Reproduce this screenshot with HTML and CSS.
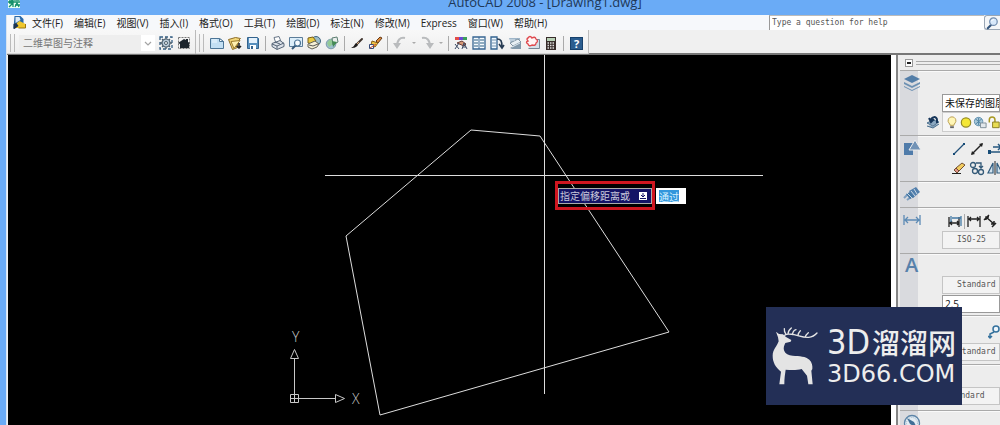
FILE: index.html
```html
<!DOCTYPE html>
<html lang="zh-CN">
<head>
<meta charset="utf-8">
<meta name="viewport" content="width=device-width, initial-scale=1">
<title>AutoCAD 2008 - [Drawing1.dwg]</title>
<link rel="stylesheet" href="styles.css">
</head>
<body>
<header class="titlebar">
  <svg class="app-icon" viewBox="0 0 12 12" aria-hidden="true"><path fill="#e8fff2" d="M0 0h12v12H0z"/><path stroke="#15906b" stroke-width="1.3" fill="none" d="M1 1l4 4M5 0v5H1M7 1h4v3H8M7 0v5M1 7h4v4M5 7l-4 4M7 11l2-4 2 4M7 9h5M0 6h12"/></svg>
  <h1 class="title">AutoCAD 2008 - [Drawing1.dwg]</h1>
</header>

<div class="frame">
  <div class="menubar">
    <svg class="doc-icon" viewBox="0 0 12 13" aria-hidden="true"><path fill="#2968a8" d="M1 0h6l3 3v9H0z"/><path fill="#dbe9f6" d="M2 1h4l1 3-5 3z"/><path fill="#efc72e" d="M2 8l4-3 6 3v4H1z"/><path fill="#1b3552" d="M0 8l3-1 2 3-4 3H0z"/><path stroke="#9b7812" fill="none" d="M5 12h7V8"/></svg>
    <nav class="menus" aria-label="菜单">
      <button>文件(F)</button><button>编辑(E)</button><button>视图(V)</button><button>插入(I)</button><button>格式(O)</button><button>工具(T)</button><button>绘图(D)</button><button>标注(N)</button><button>修改(M)</button><button>Express</button><button>窗口(W)</button><button>帮助(H)</button>
    </nav>
    <form class="help-search">
      <input type="text" aria-label="帮助搜索" value="Type a question for help">
      <button type="button" aria-label="搜索"><svg class="ico" viewBox="0 0 16 16"><path d="M6 10l-4 4" stroke="#34557c" stroke-width="2.4" stroke-linecap="round"/><circle cx="8.500" cy="6.500" r="4.300" fill="#d7e8fa" stroke="#718cae" stroke-width="1.400"/><path d="M6 6q1-2 3-2" fill="none" stroke="#fff"/></svg></button>
    </form>
  </div>

  <div class="toolbars">
    <div class="toolbar">
      <span class="grip"></span>
      <span class="workspace">
        <select aria-label="工作空间"><option>二维草图与注释</option></select>
        <svg class="chevron" viewBox="0 0 14 16" aria-hidden="true"><path d="M4 7l3 3 3-3" fill="none" stroke="#a4a4a4" stroke-width="1.200"/></svg>
      </span>
      <button class="tool" aria-label="工作空间设置"><svg class="ico" viewBox="0 0 16 16"><path fill="none" stroke="#355f84" stroke-width="1.300" stroke-dasharray="3 2" d="M2 2h12v12H2z"/><circle cx="8" cy="8" r="4" fill="#b9cad8" stroke="#4b5d6c" stroke-width="1.200"/><circle cx="8" cy="8" r="1.500" fill="#fff" stroke="#4b5d6c"/><path stroke="#4b5d6c" stroke-width="1.300" d="M8 2v2M8 12v2M2 8h2M12 8h2M4 4l1 1M11 11l1 1M12 4l-1 1M5 11l-1 1"/></svg></button>
      <button class="tool" aria-label="我的工作空间"><svg class="ico" viewBox="0 0 16 16"><path fill="none" stroke="#777" stroke-dasharray="2 1" d="M2.500 2.500h11v11h-11z"/><path fill="#1c242c" d="M2 8l6-4 2 1V4h2v3l2 1-1 1v4H4V9z"/></svg></button>
    </div>
    <div class="toolbar">
      <span class="grip"></span>
      <button class="tool" aria-label="新建"><svg class="ico" viewBox="0 0 16 16"><path fill="#c3dff3" stroke="#4c7597" d="M1.500 3.500h9l4 3v7h-13z"/><path fill="#fff" stroke="#4c7597" d="M10.500 3.500v3h4z"/><path stroke="#eef8ff" d="M3 5h5M3 7h5"/></svg></button>
      <button class="tool" aria-label="打开"><svg class="ico" viewBox="0 0 16 16"><path fill="#f4d778" stroke="#8d6c26" d="M1.500 4.500l7-2 5 1-3 3v6l-5 2z"/><path fill="#ffefae" stroke="#9b7b30" d="M4 6.500l9-1-6 8z"/><path stroke="#222" stroke-width="1.600" fill="none" d="M12 8v5M9.500 11l2.500 2 2-2"/></svg></button>
      <button class="tool" aria-label="保存"><svg class="ico" viewBox="0 0 16 16"><path fill="#578fbd" stroke="#34638d" d="M2.500 2.500h10l1 1v10h-11z"/><path fill="#e5f1fb" d="M4 3h8v5H4z"/><path fill="#fff" d="M5 10h6v4H5z"/><path fill="#34638d" d="M6 11h2v3H6z"/></svg></button>
      <span class="sep"></span>
      <button class="tool" aria-label="打印"><svg class="ico" viewBox="0 0 16 16"><path fill="#fff" stroke="#687687" d="M4 2.500l5-1 2 5-5 2z"/><path fill="#dce1e8" stroke="#566577" d="M2 8.500l8-3 4 3v3l-7 3-5-3z"/><path fill="none" stroke="#566577" d="M2 9l5 2 7-3M5 7l5 2M7 11v3"/></svg></button>
      <button class="tool" aria-label="打印预览"><svg class="ico" viewBox="0 0 16 16"><path fill="#dceefa" stroke="#5c7d99" d="M1.500 2.500h13v9h-13z"/><path stroke="#355a7c" stroke-width="2" d="M8 10l-4 4"/><circle cx="9.500" cy="8" r="3" fill="#f8fcff" stroke="#4e7698" stroke-width="1.200"/></svg></button>
      <button class="tool" aria-label="发布"><svg class="ico" viewBox="0 0 16 16"><circle cx="10" cy="6" r="4.500" fill="#9cbdc8" stroke="#406581"/><path fill="#e8ca42" stroke="#795e18" d="M2 3l5-1 3 4-3 3-5-1z"/><path fill="#f5f0d5" stroke="#626258" d="M2 9l7-3 4 3-2 3-5 2-4-2z"/><path stroke="#555" fill="none" d="M3 10l4 1 5-2"/></svg></button>
      <button class="tool" aria-label="三维DWF"><svg class="ico" viewBox="0 0 16 16"><circle cx="7" cy="9" r="4.800" fill="#9cbfce" stroke="#7d9bab"/><path fill="#93ca95" d="M3 8l3-4 3 2-1 4-3 2z"/><path fill="#e9eeec" stroke="#5c7d70" d="M8 3l5-1 1 5-5 3z"/><path fill="#448c54" d="M8 6l5 1-4 5z"/></svg></button>
      <span class="sep"></span>
      <button class="tool" aria-label="剪切"><svg class="ico" viewBox="0 0 16 16"><path stroke="#40352e" stroke-width="2" stroke-linecap="round" d="M13 4L8 9"/><path fill="#1d1b1a" d="M7 8l2 2c-2 3-5 3-7 3 3-1 3-3 5-5z"/><path stroke="#d7a372" d="M8 9l2-2"/></svg></button>
      <button class="tool" aria-label="特性匹配"><svg class="ico" viewBox="0 0 16 16"><path fill="#e08b38" stroke="#663916" d="M9 6l4-4 2 1-4 5z"/><path fill="#f2c545" stroke="#845e18" d="M5 6l6 2-3 4-4-2z"/><path fill="#f2fbff" stroke="#384b78" d="M2.500 9.500h4v4h-4z"/><path stroke="#c94731" d="M3 13l6-4"/></svg></button>
      <span class="sep"></span>
      <button class="tool" aria-label="放弃"><svg class="ico" viewBox="0 0 16 16"><path fill="none" stroke="#b9bbbd" stroke-width="2" d="M13 3C8 2 5 5 5 12"/><path fill="#b9bbbd" d="M1 8h8l-4 6z"/></svg></button>
      <button class="drop" aria-label="放弃列表"><svg viewBox="0 0 6 4"><path fill="#aaa" d="M1 1h4L3 3z"/></svg></button>
      <button class="tool" aria-label="重做"><svg class="ico" viewBox="0 0 16 16"><path fill="none" stroke="#b9bbbd" stroke-width="2" d="M3 3c5-1 8 2 8 9"/><path fill="#b9bbbd" d="M7 8h8l-4 6z"/></svg></button>
      <button class="drop" aria-label="重做列表"><svg viewBox="0 0 6 4"><path fill="#aaa" d="M1 1h4L3 3z"/></svg></button>
      <span class="sep"></span>
      <button class="tool" aria-label="特性"><svg class="ico" viewBox="0 0 16 16"><path fill="#e34d48" d="M2 2h4v3H2z"/><path fill="#6b49d2" d="M6 2h4v3H6z"/><path fill="#3ba05c" d="M10 2h4v3h-4z"/><path fill="#d89a78" stroke="#6c3d37" d="M4 8l5-2 4 3-2 2z"/><path fill="none" stroke="#3b4a64" d="M2 14l4-6M2 9l4 5M9 14l2-6 3 6M10 12h3"/></svg></button>
      <button class="tool" aria-label="设计中心"><svg class="ico" viewBox="0 0 16 16"><path fill="#f6fbff" stroke="#376692" stroke-width="1.300" d="M2 2h12v12H2z"/><path stroke="#376692" d="M8 2v12"/><path fill="none" stroke="#6f93ab" stroke-width="1.500" stroke-dasharray="2 1" d="M4 4v9M6 4v9M10 4v9M12 4v9"/></svg></button>
      <button class="tool" aria-label="工具选项板"><svg class="ico" viewBox="0 0 16 16"><path fill="#eff8ff" stroke="#336390" stroke-width="1.300" d="M2 2h6v12H2z"/><path stroke="#7792aa" d="M3 5h4M3 8h4M3 11h4"/><path fill="none" stroke="#273b52" stroke-width="1.600" d="M8 4c4 0 5 2 5 8M10 9l3 4 2-3"/></svg></button>
      <button class="tool" aria-label="图纸集"><svg class="ico" viewBox="0 0 16 16"><path fill="#9fb6c9" d="M2 3h11v3L8 8H4z"/><path fill="#e8f0f4" stroke="#8194a2" d="M3 8l8-4 3 3-8 4z"/><path fill="#8299aa" d="M3 13l11-6v7H5z"/><path stroke="#dbe6ed" d="M3 5h5M5 12l8-4"/></svg></button>
      <button class="tool" aria-label="标记集"><svg class="ico" viewBox="0 0 16 16"><path fill="#d5e0e9" stroke="#768796" d="M5.500 4.500h9v9h-11"/><path fill="#fff5f5" stroke="#df4b50" stroke-width="1.400" d="M3 3q2-3 4 0 3-2 4 1 3 2 0 4 0 3-4 2-3 2-4-1-3-2 0-3-2-2 0-3z"/></svg></button>
      <button class="tool" aria-label="快速计算器"><svg class="ico" viewBox="0 0 16 16"><path fill="#382d2a" d="M3 2h10v13H3z"/><path fill="#b8d1b6" d="M4 3h8v3H4z"/><path stroke="#ddd" stroke-width="1.300" stroke-dasharray="1.500 1" d="M4.500 8H12M4.500 10.500H12M4.500 13H12"/></svg></button>
      <span class="sep"></span>
      <button class="tool help" aria-label="帮助">?</button>
    </div>
  </div>

  <div class="work">
    <main class="canvas">
      <svg class="drawing" width="883" height="370" viewBox="8 55 883 370" fill="none" stroke="#ddd" aria-label="图形">
        <path shape-rendering="crispEdges" d="M544.500 55v339M325 175.500h438"/>
        <path d="M471 130L540 136 669 332 380 415 346 236z"/>
        <g stroke="#c8c8c8"><path d="M290.500 394.500h8v8h-8zM290.500 398.500h45M294.500 402.500v-44M335.500 394.500v8l9-4zM290.500 358.500h8l-4-9z"/></g>
        <g class="axis"><text x="292" y="342">Y</text><text x="352" y="404">X</text></g>
      </svg>
      <div class="prompt">
        <label for="distance">指定偏移距离或 <svg viewBox="0 0 8 8" aria-hidden="true"><path fill="#fff" d="M0 0h8v8H0z"/><path stroke="#141466" fill="none" d="M4 1v4M2 3l2 2 2-2M1 6.500h6"/></svg></label>
      </div>
      <input class="distance" id="distance" type="text" value="通过">
    </main>

    <aside class="dashboard">
      <div class="dash-head"><button aria-label="最小化"></button><span></span></div>
      <section class="group layers">
        <div class="rail"><svg viewBox="0 0 18 18"><path fill="#537ea8" d="M1 5l8-4 8 4-8 4z"/><path fill="#6d91b3" d="M1 8l8 4 8-4v2l-8 4-8-4zM1 12l8 4 8-4v1l-8 4-8-4z"/></svg></div>
        <div class="body">
          <select class="field indent ui" aria-label="图层状态"><option>未保存的图层状态</option></select>
          <div class="row">
            <svg class="ico" viewBox="0 0 16 16"><path fill="#8ba8c1" stroke="#4d718f" d="M2 9l6-3 6 2-6 4zM2 12l6 2 6-4"/><path fill="none" stroke="#17365a" stroke-width="2" d="M6 7c0-5 6-5 6-1v3M4 4l2 4 3-3"/></svg>
            <div class="layer-box">
              <svg class="mini" viewBox="0 0 14 16"><path fill="#fff6b6" stroke="#b69a48" d="M5 11c0-2-3-3-2-6 1-4 7-4 8 0 1 3-2 4-2 6z"/><path stroke="#666" stroke-width="2" d="M5 13h4"/></svg>
              <svg class="mini" viewBox="0 0 14 16"><circle cx="7" cy="8" r="5" fill="#f4e736" stroke="#958b27" stroke-width="1.300"/></svg>
              <svg class="mini" viewBox="0 0 14 16"><circle cx="5.500" cy="7" r="4.500" fill="#a9c8d9" stroke="#6292b1"/><path stroke="#4e83a4" d="M2 4l7 6M2 10l7-6M5.500 3v8"/><path fill="#e2e8ec" stroke="#7d8d98" d="M7.500 8.500h6v5h-6z"/></svg>
              <svg class="mini" viewBox="0 0 14 16"><path fill="none" stroke="#a99924" stroke-width="1.600" d="M2 8V5c0-4 6-4 6 0v3"/><path fill="#e8dc53" stroke="#867b20" d="M5.500 7.500h7v6h-7z"/></svg>
            </div>
          </div>
        </div>
      </section>
      <section class="group draw">
        <div class="rail"><svg viewBox="0 0 18 18"><path fill="#4f7baa" d="M1 4h9v12H1z"/><path fill="#7293b6" stroke="#eee" d="M12 1l6 10H6z"/></svg></div>
        <div class="body">
          <div class="row indent tools">
            <svg class="ico" viewBox="0 0 16 16"><path stroke="#225078" stroke-width="1.200" d="M3 13L13 3"/><path fill="#164b77" d="M2 12h2v2H2zM12 2h2v2h-2z"/></svg>
            <svg class="ico" viewBox="0 0 16 16"><path stroke="#222" stroke-width="1.400" d="M3 13L13 3"/><path fill="#222" d="M14 2l-4 1 3 3zM2 14l4-1-3-3z"/></svg>
            <svg class="ico" viewBox="0 0 16 16"><path fill="none" stroke="#25577f" stroke-width="1.500" d="M2 11h12M6 6h8M11 3l3 3-3 3"/><path fill="#174d78" d="M1 9h3v4H1z"/></svg>
          </div>
          <div class="row indent tools">
            <svg class="ico" viewBox="0 0 16 16"><path fill="#f2cc5f" stroke="#725031" d="M5 8l6-5 3 2-6 6z"/><path fill="#df938a" stroke="#725031" d="M3 10l2-2 3 3-2 2z"/><path stroke="#222" d="M1 13.500h9"/></svg>
            <svg class="ico" viewBox="0 0 16 16"><g fill="none" stroke="#345a78" stroke-width="1.300"><circle cx="4" cy="5" r="2.500"/><circle cx="6" cy="11" r="2.500"/><circle cx="12" cy="12" r="2.500"/><path d="M7 3h5v5M10 6l2 2 2-2"/></g></svg>
            <svg class="ico" viewBox="0 0 16 16"><path fill="#d3e3ee" stroke="#315c7e" stroke-width="1.200" d="M6 3v10H1zM10 3v10h5z"/><path stroke="#222" d="M8 1v14"/></svg>
          </div>
        </div>
      </section>
      <section class="group render">
        <div class="rail"><svg viewBox="0 0 18 18"><path fill="#527fac" d="M6 6l7-4 4 5-7 6z"/><path stroke="#7e9fc0" stroke-width="2" d="M5 9l-4 4M8 12l-4 3"/><path fill="#4577a4" d="M3 9l4-2 4 5-4 2z"/><path stroke="#cad8e4" d="M8 6l4 5M11 4l3 5M4 8l5 5"/></svg></div>
      </section>
      <section class="group dims">
        <div class="rail"><svg viewBox="0 0 18 18"><path fill="none" stroke="#5d8bb5" stroke-width="1.300" d="M1 4v10M17 4v10M2 9h14M5 6L2 9l3 3M13 6l3 3-3 3"/></svg></div>
        <div class="body">
          <div class="row indent tight">
            <svg class="ico" viewBox="0 0 16 16"><path fill="none" stroke="#222" stroke-width="1.300" d="M2 4v10M12 4v10M3 10h9M5 8l-2 2 2 2M10 8l2 2-2 2"/><path fill="none" stroke="#447aa5" stroke-width="1.300" d="M4 3v6M14 3v10M5 5h9"/></svg>
            <span class="sep"></span>
            <svg class="ico" viewBox="0 0 16 16"><path fill="none" stroke="#222" stroke-width="1.300" d="M2 3v11M14 3v11M3 6h10M5 4L3 6l2 2M11 4l2 2-2 2"/></svg>
            <svg class="ico" viewBox="0 0 16 16"><path fill="none" stroke="#222" stroke-width="1.500" d="M2 7l5-5M10 14l4-4M4 4l8 7M4 7V4h3M12 8v3H9"/></svg>
          </div>
          <div class="field indent style">ISO-25</div>
        </div>
      </section>
      <section class="group texts">
        <div class="rail letter">A</div>
        <div class="body">
          <div class="field indent style">Standard</div>
          <input class="field indent number ui" type="text" value="2.5" aria-label="文字高度">
        </div>
      </section>
      <section class="group leaders">
        <div class="rail"></div>
        <div class="body">
          <div class="row indent tools far"><svg class="ico" viewBox="0 0 16 16"><circle cx="8" cy="5" r="3" fill="#eef6fc" stroke="#34719d" stroke-width="1.500"/><path fill="none" stroke="#34719d" stroke-width="1.500" d="M6 8l-4 2v4M0 12l2 2 2-2"/></svg></div>
          <div class="field indent style">Standard</div>
        </div>
      </section>
      <section class="group tables">
        <div class="rail"></div>
        <div class="body"><div class="field indent style near">Standard</div></div>
      </section>
      <section class="group navigate">
        <div class="rail"><svg viewBox="0 0 18 18"><circle cx="9" cy="9" r="7.500" fill="#e4edf4" stroke="#5d85a8" stroke-width="1.300"/><circle cx="9" cy="9" r="5.500" fill="none" stroke="#9eb6c9" stroke-dasharray="1 1"/><path fill="#416f97" d="M4 4l7 4 3 6-7-4z"/></svg></div>
      </section>
    </aside>

    <div class="watermark">
      <svg viewBox="18 20 138 176" aria-hidden="true">
        <path fill="#e4e4e4" d="M30 35l9 7 12 1 9 8 16 9-2 5-16 4c-4 8-6 14-4 22 4 12 14 15 26 16 20 1 40 2 50 12 8 8 10 18 9 28l-3 5 4 41h-13l-4-26-16-20c-14 4-30 4-48 2-2 14-4 26-4 44H40l5-38c-16-13-25-28-25-48 0-18 13-28 18-43l-2-12z"/>
        <path fill="none" stroke="#e4e4e4" stroke-width="4" stroke-linecap="round" d="M56 46c8-8 18-3 28-2 14 2 24 9 44 8 10-1 18-5 25-13M60 43c-4-5-6-9-5-17M66 42c0-8 4-13 10-18M80 43c0-8 4-12 10-14M96 46c0-6 3-10 7-14M118 51c1-6 4-9 9-13"/>
      </svg>
      <div class="brand">
        <div class="brand-name"><span>3D</span>溜溜网</div>
        <div class="brand-url">3D66.COM</div>
      </div>
    </div>
  </div>
</div>
</body>
</html>
```
FILE: styles.css
```css
* { box-sizing: border-box; }
body {
  margin: 0;
  height: 100vh;
  display: flex;
  flex-direction: column;
  overflow: hidden;
  background: #6aabf6;
  color: #222;
  font: 10px/14px "Open Sans", "Noto Sans CJK SC", sans-serif;
}
button, input, select { font: inherit; color: inherit; border: 0; border-radius: 0; padding: 0; margin: 0; background: none; }
button { display: flex; align-items: center; justify-content: center; }
svg { display: block; flex: none; }
.ico { width: 16px; height: 16px; }

.titlebar { flex: none; height: 15px; display: flex; position: relative; overflow: hidden; padding-left: 8px; }
.app-icon { width: 12px; height: 12px; margin-top: -4px; }
.title { position: absolute; inset: -8px 0 auto 90px; margin: 0; text-align: center; font-size: 13px; line-height: 20px; font-weight: 400; color: #1e3858; }

.frame { flex: 1; min-height: 0; display: flex; flex-direction: column; margin-left: 6px; background: #f0f0f0; border-left: 1px solid #d8e4f0; }
.menubar { flex: none; height: 15px; display: flex; align-items: center; background: #f6f8fb; padding-left: 6px; }
.doc-icon { width: 13px; height: 13px; }
.menus { display: flex; gap: 11px; margin-left: 6px; white-space: nowrap; }
.help-search { margin-left: auto; display: flex; width: 231px; height: 15px; }
.help-search input { flex: 1; min-width: 0; background: #fff; border-left: 1px solid #999; border-top: 1px solid #bbb; padding-left: 2px; font: 8px/12px "DejaVu Sans Mono", monospace; color: #555; }
.help-search button { width: 16px; border: 1px solid #9aa6b4; border-right: 0; border-radius: 3px 0 0 3px; background: #f4f6f8; }
.help-search .ico { width: 14px; height: 14px; }

.toolbars { flex: none; display: flex; height: 25px; border-bottom: 2px solid #777; }
.toolbar { display: flex; align-items: center; height: 24px; padding: 2px 0 0 3px; border-right: 1px solid #bbb; background: linear-gradient(#f8f8f8, #eee); box-shadow: inset 0 -1px #d5d5d5; }
.toolbar + .toolbar { padding-right: 2px; }
.toolbar:first-child { padding-right: 2px; }
.grip { width: 5px; height: 18px; margin-right: 4px; border: solid #bbb; border-width: 0 1px; }
.workspace { position: relative; width: 136px; height: 17px; margin-right: 2px; background: #eee; }
.workspace select { appearance: none; width: 100%; height: 17px; padding-left: 4px; color: #777; line-height: 16px; }
.chevron { position: absolute; right: 0; top: 0; width: 14px; height: 16px; background: #fff; pointer-events: none; }
.tool { width: 18px; height: 18px; }
.toolbar .drop { width: 9px; height: 18px; }
.drop svg { width: 6px; height: 4px; }
.sep { width: 1px; height: 15px; margin: 0 3px; background: #aaa; }
.help { width: 13px; height: 13px; margin: 0 3px; background: #2b5d8f; border: 1px solid #17416c; color: #fff; font-weight: 700; font-size: 11px; line-height: 11px; }

.work { flex: 1; min-height: 0; display: flex; position: relative; }
.canvas { flex: 1; min-width: 0; position: relative; overflow: hidden; background: #000; margin-left: 1px; }
.drawing { position: absolute; left: 0; top: 0; }
.axis text { fill: #c8c8c8; stroke: none; font: 14px "Open Sans", sans-serif; font-weight: 300; }
.prompt { position: absolute; left: 547px; top: 126px; width: 100px; height: 29px; padding: 5px 2px; border: 3px solid #cf1620; }
.prompt label { display: flex; align-items: center; justify-content: space-between; margin: -1px -2px; height: 16px; padding: 0 4px 0 1px; white-space: nowrap; background: #141466; border: 1px solid #aaa; color: #c8c8dc; }
.prompt svg { width: 8px; height: 8px; }
.distance { position: absolute; left: 648px; top: 133px; width: 30px; height: 16px; padding: 1px 2px; border: 1px solid #fff; color: #d4f0ff; background: linear-gradient(#3296dc, #3296dc) 2px 1px / 20px 12px no-repeat #fff; line-height: 12px; }

.dashboard { width: 109px; flex: none; display: flex; flex-direction: column; overflow: hidden; background: #ededed; border-left: 5px solid #fff; box-shadow: inset 2px 0 #858585; padding-left: 4px; }
.dash-head { flex: none; height: 15px; display: flex; align-items: center; gap: 3px; padding-left: 5px; }
.dash-head button { width: 8px; height: 8px; border: 1px solid #999; background: linear-gradient(#222, #222) center / 4px 2px no-repeat #fff; }
.dash-head span { flex: 1; height: 4px; border: solid #aaa; border-width: 1px 0; }
.group { flex: none; display: grid; grid-template-columns: 18px minmax(0, 1fr); border-top: 1px solid #aaa; box-shadow: inset 0 1px #fafafa; }
.rail { background: #d9dade; padding: 3px 0 0 3px; }
.rail svg { width: 18px; height: 18px; }
.rail.letter { font-size: 20px; line-height: 16px; font-weight: 600; color: #5781ab; padding-left: 5px; }
.body { padding-left: 7px; display: flex; flex-direction: column; }
.indent { margin-left: 17px; }
.row { display: flex; align-items: center; gap: 1px; }
.tools { gap: 2px; padding-left: 9px; height: 19px; }
.tight { padding-left: 5px; gap: 0; height: 20px; }
.tight .sep { margin: 0 1px; }
.far { padding-left: 46px; }
.field { height: 18px; flex: none; padding: 0 0 0 14px; border: 1px solid #c5c5c5; background: #f3f3f3; color: #555; font: 8px/16px "DejaVu Sans Mono", monospace; white-space: nowrap; overflow: hidden; }
.field.ui { padding-left: 2px; background: #fff; color: #111; font: 10px/16px "Open Sans", "Noto Sans CJK SC", sans-serif; border-color: #999; }
select.field { appearance: none; }
.field.near { padding-left: 3px; }
.layer-box { display: flex; align-items: center; height: 20px; flex: 1; padding-left: 2px; background: #f6f6f6; border: 1px solid #ccc; }
.mini { width: 14px; height: 15px; }
.layers { height: 65px; }
.layers .body { padding-top: 23px; }
.draw { height: 46px; }
.draw .body { padding-top: 3px; }
.render { height: 26px; }
.dims { height: 46px; }
.dims .body { padding-top: 3px; }
.texts { height: 62px; }
.texts .body { padding-top: 22px; gap: 1px; }
.leaders { height: 49px; }
.leaders .body { padding-top: 6px; gap: 2px; }
.tables { height: 46px; }
.tables .body { padding-top: 22px; }
.navigate { height: 46px; }

.watermark { position: absolute; right: 38px; bottom: 20px; width: 196px; height: 98px; display: flex; align-items: center; gap: 9px; padding-left: 6px; background: #232f56; color: #ededed; }
.watermark svg { width: 46px; height: 60px; }
.brand { white-space: nowrap; }
.brand-name { display: flex; align-items: center; gap: 2px; height: 36px; font: 500 28px/36px "Noto Sans CJK SC", sans-serif; }
.brand-name span { font: 34px/36px "DejaVu Sans Condensed", "Liberation Sans", sans-serif; }
.brand-url { font: 24px/28px "DejaVu Sans", sans-serif; }
```
